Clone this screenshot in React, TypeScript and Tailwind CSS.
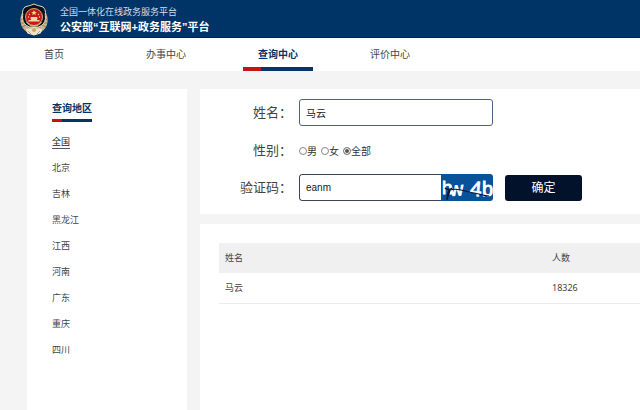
import React, { useState } from 'react';

const navItems = ['首页', '办事中心', '查询中心', '评价中心'];

const regions = ['全国', '北京', '吉林', '黑龙江', '江西', '河南', '广东', '重庆', '四川'];

const genders = ['男', '女', '全部'];

const results = [{ name: '马云', count: 18326 }];

const Emblem: React.FC = () => (
  <svg viewBox="0 0 56 66" className="h-[33px] w-7 shrink-0" aria-hidden="true">
    {/* wreath */}
    <path
      d="M7 15C2 22 0 30 1 38c1 9 6 16 14 21l13 5 13-5c8-5 13-12 14-21 1-8-1-16-6-23z"
      fill="#cbb78d"
    />
    <path
      d="M3 24l7 5M1 32l8 3M1 40l9 0M4 48l8-4M10 55l7-6M53 24l-7 5M55 32l-8 3M55 40l-9 0M52 48l-8-4M46 55l-7-6"
      stroke="#75684a"
      strokeWidth="1.5"
    />
    {/* shield */}
    <path
      d="M28 2C22 5 15 6 10 8c-3 3-5 7-5 11 1 4 0 8 0 12 1 9 6 14 14 17h18c8-3 13-8 14-17 0-4-1-8 0-12 0-4-2-8-5-11-5-2-12-3-18-6z"
      fill="#0b101c"
      stroke="#ead9b4"
      strokeWidth="2"
    />
    <circle cx="28" cy="28" r="17" fill="#c8171c" stroke="#e9cf94" strokeWidth="1.6" />
    <path d="M28 14l1.6 4h4.2l-3.4 2.6 1.3 4-3.7-2.4-3.7 2.4 1.3-4-3.4-2.6h4.2z" fill="#f6dc84" />
    <circle cx="19" cy="23" r="1.3" fill="#f6dc84" />
    <circle cx="37" cy="23" r="1.3" fill="#f6dc84" />
    <circle cx="17" cy="28" r="1.3" fill="#f6dc84" />
    <circle cx="39" cy="28" r="1.3" fill="#f6dc84" />
    <path d="M20 31l2-3h12l2 3zM22 31h12v3H22zM17 34h22v3H17z" fill="#f0d9a0" />
    <path d="M13 38c4 6 9 8 15 8s11-2 15-8" fill="none" stroke="#e9cf94" strokeWidth="2" />
    {/* ribbon and gear */}
    <path d="M11 52c6-3 11-1 17 2 6-3 11-5 17-2l-4 9-13 4-13-4z" fill="#ece2c8" />
    <circle cx="28" cy="54" r="5" fill="#c5a767" stroke="#f8f0dc" strokeWidth="1.5" />
    <path d="M16 56l6 6M40 56l-6 6" stroke="#a08a58" strokeWidth="1.5" />
  </svg>
);

const Captcha: React.FC = () => (
  <svg viewBox="0 0 52 27" className="h-full w-[52px]" role="img" aria-label="验证码">
    <rect width="52" height="27" fill="#08529a" />
    <g fill="#fff" stroke="#fff" strokeWidth="0.8" fontFamily="Liberation Sans, sans-serif">
      <text x="1" y="20" fontSize="19">h</text>
      <text x="9" y="22" fontSize="19" transform="rotate(-4 9 22)">w</text>
      <text x="29" y="22" fontSize="21" transform="rotate(5 35 15)">4</text>
      <text x="41" y="22" fontSize="20">b</text>
    </g>
    <path d="M6 26c0-5 1-9 3-10 9-3 15 2 24 3 6 1 10 3 15 3" fill="none" stroke="#0a1630" strokeWidth="1.2" />
    <path d="M4 14c2 2 5 2 7 0M6 25l3-9" fill="none" stroke="#0a1630" strokeWidth="1.5" />
  </svg>
);

const Header: React.FC = () => (
  <header className="flex h-[38px] items-center gap-3 border-b border-[#00245a] bg-[#003366] px-5 pt-0.5 text-white">
    <Emblem />
    <div>
      <p className="text-[9px] leading-[14px] text-[#d5deea]">全国一体化在线政务服务平台</p>
      <h1 className="text-[11px] leading-[16px] font-bold">公安部“互联网+政务服务”平台</h1>
    </div>
  </header>
);

const Nav: React.FC = () => (
  <nav className="flex h-[33px] gap-[42px] bg-white px-[19px] text-[10px]">
    {navItems.map((item) => {
      const active = item === '查询中心';
      return (
        <a
          key={item}
          href="#"
          className={`flex w-[70px] flex-col pt-1 text-center ${active ? 'font-bold text-[#003366]' : 'text-[#444]'}`}
        >
          <span className="flex-1 leading-[25px]">{item}</span>
          {active && (
            <span className="flex h-1 bg-[#0b3266]">
              <span className="w-1/4 bg-[#c01418]" />
            </span>
          )}
        </a>
      );
    })}
  </nav>
);

const Sidebar: React.FC = () => (
  <aside className="w-40 shrink-0 bg-white px-[25px] pt-3">
    <h2 className="inline-block text-[10px] leading-[16px] font-bold text-[#003366]">
      查询地区
      <span className="mt-0.5 flex h-[3px] bg-[#0b3266]">
        <span className="w-1/4 bg-[#c01418]" />
      </span>
    </h2>
    <ul className="text-[9px] text-[#444]">
      {regions.map((region, index) => (
        <li key={region} className="flex h-[26px] items-center">
          <a href="#" className={index === 0 ? 'border-b border-[#555] leading-3 text-[#222]' : 'leading-3'}>
            {region}
          </a>
        </li>
      ))}
    </ul>
  </aside>
);

const SearchForm: React.FC = () => {
  const [name, setName] = useState('马云');
  const [gender, setGender] = useState('全部');
  const [code, setCode] = useState('eanm');

  return (
    <form
      className="grid grid-cols-[92px_1fr] items-center gap-x-[7px] gap-y-[11px] bg-white pt-[10px] pb-[13px] text-[10px] text-[#333]"
      onSubmit={(e) => e.preventDefault()}
    >
      <label htmlFor="name" className="text-right text-[13px] text-[#444]">姓名：</label>
      <input
        id="name"
        value={name}
        onChange={(e) => setName(e.target.value)}
        className="h-[27px] w-[194px] rounded-[3px] border border-[#4d6285] px-[6px] text-[#222]"
      />

      <span id="gender" className="pt-0.5 text-right text-[13px] text-[#444]">性别：</span>
      <div role="radiogroup" aria-labelledby="gender" className="flex h-[26px] items-center gap-1 pt-0.5">
        {genders.map((g) => (
          <label key={g} className="flex items-center">
            <input
              type="radio"
              name="gender"
              checked={gender === g}
              onChange={() => setGender(g)}
              className="size-2 appearance-none rounded-full border border-[#888] bg-white checked:bg-[#555] checked:shadow-[inset_0_0_0_1px_#fff]"
            />
            {g}
          </label>
        ))}
      </div>

      <label htmlFor="code" className="text-right text-[13px] text-[#444]">验证码：</label>
      <div className="flex items-center gap-3">
        <div className="flex h-[27px] w-[194px] overflow-hidden rounded-[3px]">
          <input
            id="code"
            value={code}
            onChange={(e) => setCode(e.target.value)}
            className="min-w-0 flex-1 rounded-l-[3px] border border-r-0 border-[#3d4456] px-[6px] text-[#222]"
          />
          <Captcha />
        </div>
        <button type="submit" className="h-[26px] w-[77px] rounded-[3px] bg-[#03122b] text-xs text-white">
          确定
        </button>
      </div>
    </form>
  );
};

const ResultTable: React.FC = () => (
  <section className="flex-1 bg-white pt-[19px] pl-[19px]">
    <table className="w-full table-fixed text-left font-['Noto_Sans','Noto_Sans_CJK_SC',sans-serif] text-[9px] text-[#444]">
      <thead>
        <tr className="h-[30px] bg-[#f0f0f0]">
          <th className="w-[327px] px-[6px] font-normal">姓名</th>
          <th className="px-[6px] font-normal">人数</th>
        </tr>
      </thead>
      <tbody>
        {results.map((row) => (
          <tr key={row.name} className="h-[30px] border-b border-[#ececec]">
            <td className="px-[6px]">{row.name}</td>
            <td className="px-[6px]">{row.count}</td>
          </tr>
        ))}
      </tbody>
    </table>
  </section>
);

const App: React.FC = () => {
  return (
    <div
      lang="zh-CN"
      className="flex min-h-screen flex-col bg-[#f4f4f4] font-['Liberation_Sans','Noto_Sans_CJK_SC',sans-serif]"
    >
      <Header />
      <Nav />
      <main className="flex flex-1 gap-[13px] pt-[18px] pl-[27px]">
        <Sidebar />
        <div className="flex min-w-0 flex-1 flex-col gap-[10px]">
          <SearchForm />
          <ResultTable />
        </div>
      </main>
    </div>
  );
};

export default App;
